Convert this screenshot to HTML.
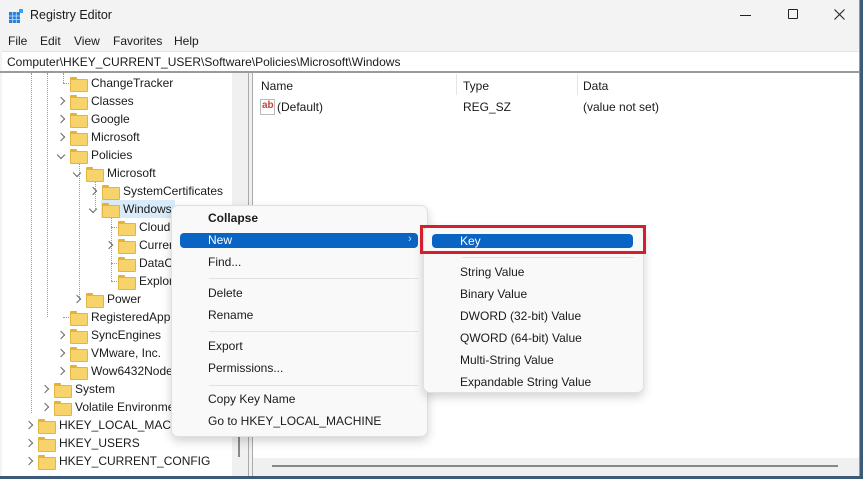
<!DOCTYPE html>
<html><head><meta charset="utf-8"><style>
*{margin:0;padding:0;box-sizing:border-box}
body{width:863px;height:479px;overflow:hidden;background:#3c5a7a;font-family:"Liberation Sans",sans-serif;font-size:12px;color:#1a1a1a;position:relative}
.a{position:absolute;white-space:nowrap}
#win{position:absolute;left:0;top:0;width:860px;height:476px;background:#f3f3f3;border-right:1px solid #999;overflow:hidden}
.fold{position:absolute;width:16px;height:13px}
.fold:before{content:"";position:absolute;left:0;top:0;width:7px;height:4px;background:#e2b13a;border-radius:1px 1px 0 0}
.fold:after{content:"";position:absolute;left:0;top:2px;width:16px;height:11px;background:#f7d36b;border:1px solid #e4b440;border-radius:1px}
.arr{position:absolute;width:6px;height:6px;border-right:1.3px solid #666;border-bottom:1.3px solid #666;transform:rotate(-45deg);margin-left:1px;margin-top:4px}
.arr.dn{transform:rotate(45deg);margin-left:2px;margin-top:5px}
.tr{position:absolute;height:18px;line-height:18px}
.mi{position:absolute;left:208px;font-size:12px}
.si{position:absolute;left:460px;font-size:12px}
.dot{position:absolute;border-left:1px dotted #999}
.hdot{position:absolute;border-top:1px dotted #999;width:8px}
</style></head><body>
<div id="win">
<div class="a" style="left:0;top:0;width:860px;height:30px;background:#f3f3f3"></div>
<svg class="a" style="left:8px;top:8px" width="16" height="16" viewBox="0 0 16 16"><rect x="1" y="4" width="11" height="11" fill="#2a7fd4"/><path d="M1 8h11M1 11.5h11M4.7 4v11M8.3 4v11" stroke="#bfe0ff" stroke-width="0.8"/><rect x="11" y="1" width="4" height="4" fill="#3aa0e8"/></svg>
<div class="a" style="left:30px;top:8px;font-size:12.5px">Registry Editor</div>
<div class="a" style="left:740px;top:15px;width:11px;height:1px;background:#222"></div>
<div class="a" style="left:788px;top:9px;width:10px;height:10px;border:1px solid #222;border-radius:1px"></div>
<svg class="a" style="left:834px;top:9px" width="11" height="11" viewBox="0 0 11 11"><path d="M0.5 0.5L10.5 10.5M10.5 0.5L0.5 10.5" stroke="#222" stroke-width="1.1"/></svg>
<div class="a" style="left:8px;top:34px">File</div>
<div class="a" style="left:40px;top:34px">Edit</div>
<div class="a" style="left:74px;top:34px">View</div>
<div class="a" style="left:113px;top:34px">Favorites</div>
<div class="a" style="left:174px;top:34px">Help</div>
<div class="a" style="left:2px;top:51px;width:858px;height:20px;background:#fff;border-top:1px solid #e5e5e5"></div>
<div class="a" style="left:7px;top:55px">Computer\HKEY_CURRENT_USER\Software\Policies\Microsoft\Windows</div>
<div class="a" style="left:0;top:71px;width:860px;height:2px;background:#9a9a9a"></div>
<div class="a" style="left:2px;top:73px;width:230px;height:403px;background:#fff"></div>
<div class="a" style="left:232px;top:73px;width:16px;height:403px;background:#f0f0f0"></div>
<div class="a" style="left:238px;top:437px;width:2px;height:20px;background:#888"></div>
<div class="a" style="left:248px;top:73px;width:5px;height:403px;background:#f0f0f0;border-left:1px solid #aaa;border-right:1px solid #aaa"></div>
<div class="a" style="left:253px;top:73px;width:606px;height:403px;background:#fff"></div>
<div class="a" style="left:261px;top:79px">Name</div>
<div class="a" style="left:456px;top:74px;width:1px;height:21px;background:#e5e5e5"></div>
<div class="a" style="left:463px;top:79px">Type</div>
<div class="a" style="left:577px;top:74px;width:1px;height:21px;background:#e5e5e5"></div>
<div class="a" style="left:583px;top:79px">Data</div>
<div class="a" style="left:260px;top:99px;width:15px;height:16px;border:1px solid #bbb;background:#fff"><span style="position:absolute;left:1px;top:0;font-size:10px;font-weight:bold;color:#c2453a">ab</span></div>
<div class="a" style="left:277px;top:100px">(Default)</div>
<div class="a" style="left:463px;top:100px">REG_SZ</div>
<div class="a" style="left:583px;top:100px">(value not set)</div>
<div class="a" style="left:253px;top:458px;width:606px;height:18px;background:#f0f0f0"></div>
<div class="a" style="left:272px;top:465px;width:566px;height:2px;background:#888"></div>
</div>

<div class="a" style="left:2px;top:73px;width:230px;height:403px;overflow:hidden">
<div class="dot" style="left:29px;top:0;height:340px"></div>
<div class="dot" style="left:45px;top:0;height:244px"></div>
<div class="dot" style="left:61px;top:0;height:10px"></div>
<div class="dot" style="left:77px;top:90px;height:136px"></div>
<div class="dot" style="left:93px;top:108px;height:28px"></div>
<div class="dot" style="left:109px;top:144px;height:64px"></div>
<div class="hdot" style="left:61px;top:10px"></div>
<div class="hdot" style="left:61px;top:244px"></div>
<div class="hdot" style="left:109px;top:154px"></div>
<div class="hdot" style="left:109px;top:190px"></div>
<div class="hdot" style="left:109px;top:208px"></div>
<div class="a" style="left:99px;top:127px;width:74px;height:18px;background:#d9ebf9"></div>
</div>

<div class="a" style="left:0;top:0;width:232px;height:476px;overflow:hidden">
<div class="fold" style="left:70px;top:77px"></div><div class="tr" style="left:91px;top:74px">ChangeTracker</div>
<div class="arr" style="left:57px;top:94px"></div><div class="fold" style="left:70px;top:95px"></div><div class="tr" style="left:91px;top:92px">Classes</div>
<div class="arr" style="left:57px;top:112px"></div><div class="fold" style="left:70px;top:113px"></div><div class="tr" style="left:91px;top:110px">Google</div>
<div class="arr" style="left:57px;top:130px"></div><div class="fold" style="left:70px;top:131px"></div><div class="tr" style="left:91px;top:128px">Microsoft</div>
<div class="arr dn" style="left:56px;top:147px"></div><div class="fold" style="left:70px;top:149px"></div><div class="tr" style="left:91px;top:146px">Policies</div>
<div class="arr dn" style="left:72px;top:165px"></div><div class="fold" style="left:86px;top:167px"></div><div class="tr" style="left:107px;top:164px">Microsoft</div>
<div class="arr" style="left:89px;top:184px"></div><div class="fold" style="left:102px;top:185px"></div><div class="tr" style="left:123px;top:182px">SystemCertificates</div>
<div class="arr dn" style="left:88px;top:201px"></div><div class="fold" style="left:102px;top:203px"></div><div class="tr" style="left:123px;top:200px">Windows</div>
<div class="fold" style="left:118px;top:221px"></div><div class="tr" style="left:139px;top:218px">Cloud</div>
<div class="arr" style="left:105px;top:238px"></div><div class="fold" style="left:118px;top:239px"></div><div class="tr" style="left:139px;top:236px">Current</div>
<div class="fold" style="left:118px;top:257px"></div><div class="tr" style="left:139px;top:254px">DataC</div>
<div class="fold" style="left:118px;top:275px"></div><div class="tr" style="left:139px;top:272px">Explorer</div>
<div class="arr" style="left:73px;top:292px"></div><div class="fold" style="left:86px;top:293px"></div><div class="tr" style="left:107px;top:290px">Power</div>
<div class="fold" style="left:70px;top:311px"></div><div class="tr" style="left:91px;top:308px">RegisteredApplications</div>
<div class="arr" style="left:57px;top:328px"></div><div class="fold" style="left:70px;top:329px"></div><div class="tr" style="left:91px;top:326px">SyncEngines</div>
<div class="arr" style="left:57px;top:346px"></div><div class="fold" style="left:70px;top:347px"></div><div class="tr" style="left:91px;top:344px">VMware, Inc.</div>
<div class="arr" style="left:57px;top:364px"></div><div class="fold" style="left:70px;top:365px"></div><div class="tr" style="left:91px;top:362px">Wow6432Node</div>
<div class="arr" style="left:41px;top:382px"></div><div class="fold" style="left:54px;top:383px"></div><div class="tr" style="left:75px;top:380px">System</div>
<div class="arr" style="left:41px;top:400px"></div><div class="fold" style="left:54px;top:401px"></div><div class="tr" style="left:75px;top:398px">Volatile Environment</div>
<div class="arr" style="left:25px;top:418px"></div><div class="fold" style="left:38px;top:419px"></div><div class="tr" style="left:59px;top:416px">HKEY_LOCAL_MACHINE</div>
<div class="arr" style="left:25px;top:436px"></div><div class="fold" style="left:38px;top:437px"></div><div class="tr" style="left:59px;top:434px">HKEY_USERS</div>
<div class="arr" style="left:25px;top:454px"></div><div class="fold" style="left:38px;top:455px"></div><div class="tr" style="left:59px;top:452px">HKEY_CURRENT_CONFIG</div>
</div>

<div class="a" style="left:171px;top:205px;width:257px;height:232px;background:#f9f9f9;border:1px solid #e0e0e0;border-radius:7px;box-shadow:0 4px 10px rgba(0,0,0,.18)"></div>
<div class="mi" style="top:211px;font-weight:bold">Collapse</div>
<div class="a" style="left:180px;top:233px;width:238px;height:15px;background:#0a64c4;border-radius:4px"></div>
<div class="mi" style="top:233px;color:#fff">New</div>
<div class="a" style="left:408px;top:233px;color:#cfe0f5;font-size:11px">›</div>
<div class="mi" style="top:255px">Find...</div>
<div class="a" style="left:209px;top:278px;width:209px;height:1px;background:#e2e2e2"></div>
<div class="mi" style="top:286px">Delete</div>
<div class="mi" style="top:308px">Rename</div>
<div class="a" style="left:209px;top:331px;width:209px;height:1px;background:#e2e2e2"></div>
<div class="mi" style="top:339px">Export</div>
<div class="mi" style="top:361px">Permissions...</div>
<div class="a" style="left:209px;top:385px;width:209px;height:1px;background:#e2e2e2"></div>
<div class="mi" style="top:392px">Copy Key Name</div>
<div class="mi" style="top:414px">Go to HKEY_LOCAL_MACHINE</div>

<div class="a" style="left:423px;top:226px;width:221px;height:167px;background:#f9f9f9;border:1px solid #e0e0e0;border-radius:7px;box-shadow:0 4px 10px rgba(0,0,0,.18)"></div>
<div class="a" style="left:432px;top:234px;width:201px;height:14px;background:#0a64c4;border-radius:4px"></div>
<div class="si" style="top:234px;color:#fff">Key</div>
<div class="a" style="left:420px;top:225px;width:226px;height:29px;border:3px solid #d3202e"></div>
<div class="a" style="left:462px;top:257px;width:172px;height:1px;background:#e2e2e2"></div>
<div class="si" style="top:265px">String Value</div>
<div class="si" style="top:287px">Binary Value</div>
<div class="si" style="top:309px">DWORD (32-bit) Value</div>
<div class="si" style="top:331px">QWORD (64-bit) Value</div>
<div class="si" style="top:353px">Multi-String Value</div>
<div class="si" style="top:375px">Expandable String Value</div>
</body></html>
